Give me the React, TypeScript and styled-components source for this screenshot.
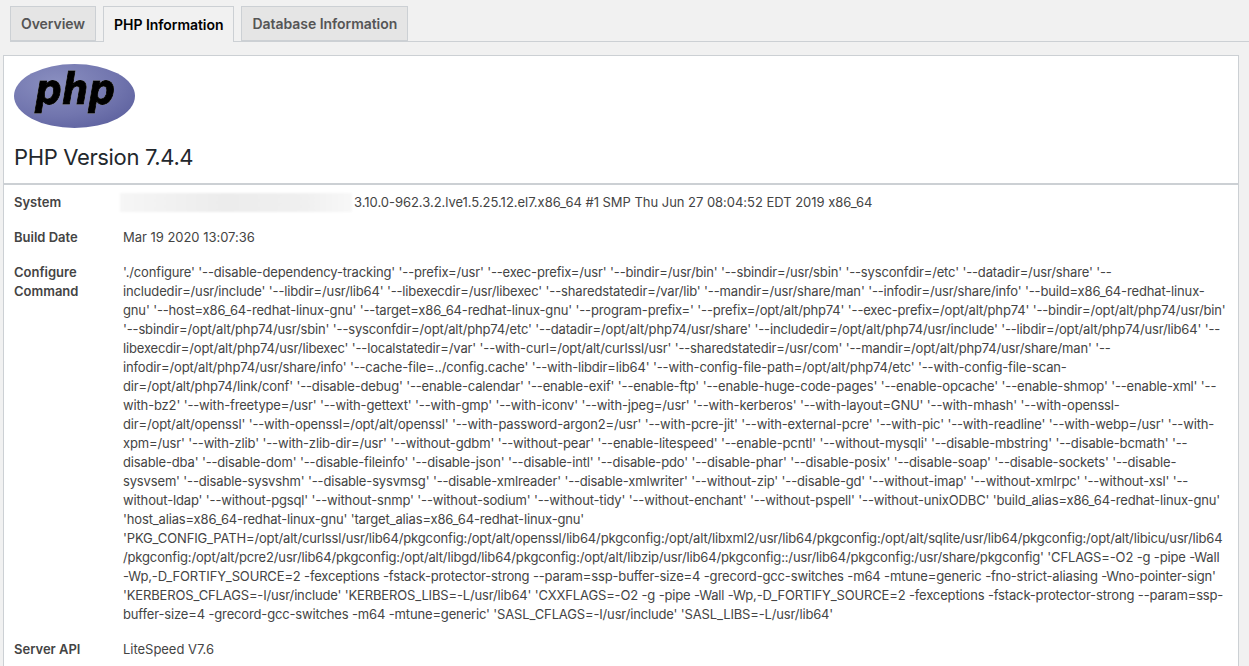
import styled, { createGlobalStyle } from "styled-components";

const GlobalStyle = createGlobalStyle`
  html, body {
    margin: 0;
    padding: 0;
    background: #f1f1f1;
    overflow: hidden;
  }
  body {
    font-family: Inter, "Liberation Sans", sans-serif;
    font-feature-settings: "calt" 0;
    color: #444;
    font-size: 13px;
  }
`;

const Page = styled.div`
  height: 666px;
  padding: 6px 10px 0 3px;
  box-sizing: border-box;
  overflow: hidden;
`;

const TabBar = styled.div`
  display: flex;
  gap: 7px;
  height: 36px;
  margin-left: 7px;
  margin-right: -10px;
  border-bottom: 1px solid #ccd0d4;
  box-sizing: border-box;
`;

const Tab = styled.div<{ $active?: boolean }>`
  height: ${(p) => (p.$active ? "36px" : "35px")};
  padding: ${(p) => (p.$active ? "0 10px 1px" : "0 10px")};
  display: flex;
  align-items: center;
  box-sizing: border-box;
  border: 1px solid #ccd0d4;
  border-bottom: ${(p) => (p.$active ? "none" : "1px solid #ccd0d4")};
  background: ${(p) => (p.$active ? "#f1f1f1" : "#e5e5e5")};
  color: ${(p) => (p.$active ? "#000" : "#555")};
  font-size: 14px;
  font-weight: 600;
  letter-spacing: -0.05px;
  white-space: nowrap;
`;

const Card = styled.div`
  margin-top: 13px;
  background: #fff;
  border: 1px solid #ccd0d4;
  border-bottom: none;
  height: 620px;
  overflow: hidden;
`;

const Head = styled.div`
  height: 129px;
  padding: 8px 10px 0;
  box-sizing: border-box;
  border-bottom: 2px solid #ccd0d4;
`;

const Logo = styled.svg`
  display: block;
  width: 122px;
  height: 65px;
`;

const LogoText = styled.text`
  font-family: "DejaVu Sans", sans-serif;
  font-size: 42px;
  font-weight: 700;
  font-style: italic;
  fill: #000;
  stroke: #000;
  stroke-width: 1px;
  filter: drop-shadow(0.6px 0.6px 0 #fff);
`;

const Title = styled.h1`
  margin: 13px 0 0;
  font-size: 22px;
  line-height: 30px;
  font-weight: 400;
  letter-spacing: -0.35px;
  color: #23282d;
`;

const Row = styled.div`
  display: flex;
  padding: 8px 10px;
  line-height: 19px;
`;

const Label = styled.div`
  flex: 0 0 109px;
  font-weight: 600;
  color: #444;
`;

const Value = styled.div`
  flex: 1;
  color: #444;
  letter-spacing: -0.03px;
  white-space: nowrap;
`;

const Line = styled.div`
  letter-spacing: -0.15px;
`;

const Blur = styled.span`
  display: inline-block;
  width: 232px;
  height: 19px;
  margin-left: -3px;
  margin-right: 2px;
  vertical-align: top;
  background: linear-gradient(90deg, #f6f6f6, #ececec 45%, #f0f0f0 80%, #f8f8f8);
  filter: blur(1px);
`;

const configureLines = [
  "'./configure' '--disable-dependency-tracking' '--prefix=/usr' '--exec-prefix=/usr' '--bindir=/usr/bin' '--sbindir=/usr/sbin' '--sysconfdir=/etc' '--datadir=/usr/share' '--",
  "includedir=/usr/include' '--libdir=/usr/lib64' '--libexecdir=/usr/libexec' '--sharedstatedir=/var/lib' '--mandir=/usr/share/man' '--infodir=/usr/share/info' '--build=x86_64-redhat-linux-",
  "gnu' '--host=x86_64-redhat-linux-gnu' '--target=x86_64-redhat-linux-gnu' '--program-prefix=' '--prefix=/opt/alt/php74' '--exec-prefix=/opt/alt/php74' '--bindir=/opt/alt/php74/usr/bin'",
  "'--sbindir=/opt/alt/php74/usr/sbin' '--sysconfdir=/opt/alt/php74/etc' '--datadir=/opt/alt/php74/usr/share' '--includedir=/opt/alt/php74/usr/include' '--libdir=/opt/alt/php74/usr/lib64' '--",
  "libexecdir=/opt/alt/php74/usr/libexec' '--localstatedir=/var' '--with-curl=/opt/alt/curlssl/usr' '--sharedstatedir=/usr/com' '--mandir=/opt/alt/php74/usr/share/man' '--",
  "infodir=/opt/alt/php74/usr/share/info' '--cache-file=../config.cache' '--with-libdir=lib64' '--with-config-file-path=/opt/alt/php74/etc' '--with-config-file-scan-",
  "dir=/opt/alt/php74/link/conf' '--disable-debug' '--enable-calendar' '--enable-exif' '--enable-ftp' '--enable-huge-code-pages' '--enable-opcache' '--enable-shmop' '--enable-xml' '--",
  "with-bz2' '--with-freetype=/usr' '--with-gettext' '--with-gmp' '--with-iconv' '--with-jpeg=/usr' '--with-kerberos' '--with-layout=GNU' '--with-mhash' '--with-openssl-",
  "dir=/opt/alt/openssl' '--with-openssl=/opt/alt/openssl' '--with-password-argon2=/usr' '--with-pcre-jit' '--with-external-pcre' '--with-pic' '--with-readline' '--with-webp=/usr' '--with-",
  "xpm=/usr' '--with-zlib' '--with-zlib-dir=/usr' '--without-gdbm' '--without-pear' '--enable-litespeed' '--enable-pcntl' '--without-mysqli' '--disable-mbstring' '--disable-bcmath' '--",
  "disable-dba' '--disable-dom' '--disable-fileinfo' '--disable-json' '--disable-intl' '--disable-pdo' '--disable-phar' '--disable-posix' '--disable-soap' '--disable-sockets' '--disable-",
  "sysvsem' '--disable-sysvshm' '--disable-sysvmsg' '--disable-xmlreader' '--disable-xmlwriter' '--without-zip' '--disable-gd' '--without-imap' '--without-xmlrpc' '--without-xsl' '--",
  "without-ldap' '--without-pgsql' '--without-snmp' '--without-sodium' '--without-tidy' '--without-enchant' '--without-pspell' '--without-unixODBC' 'build_alias=x86_64-redhat-linux-gnu'",
  "'host_alias=x86_64-redhat-linux-gnu' 'target_alias=x86_64-redhat-linux-gnu'",
  "'PKG_CONFIG_PATH=/opt/alt/curlssl/usr/lib64/pkgconfig:/opt/alt/openssl/lib64/pkgconfig:/opt/alt/libxml2/usr/lib64/pkgconfig:/opt/alt/sqlite/usr/lib64/pkgconfig:/opt/alt/libicu/usr/lib64",
  "/pkgconfig:/opt/alt/pcre2/usr/lib64/pkgconfig:/opt/alt/libgd/lib64/pkgconfig:/opt/alt/libzip/usr/lib64/pkgconfig::/usr/lib64/pkgconfig:/usr/share/pkgconfig' 'CFLAGS=-O2 -g -pipe -Wall",
  "-Wp,-D_FORTIFY_SOURCE=2 -fexceptions -fstack-protector-strong --param=ssp-buffer-size=4 -grecord-gcc-switches -m64 -mtune=generic -fno-strict-aliasing -Wno-pointer-sign'",
  "'KERBEROS_CFLAGS=-I/usr/include' 'KERBEROS_LIBS=-L/usr/lib64' 'CXXFLAGS=-O2 -g -pipe -Wall -Wp,-D_FORTIFY_SOURCE=2 -fexceptions -fstack-protector-strong --param=ssp-",
  "buffer-size=4 -grecord-gcc-switches -m64 -mtune=generic' 'SASL_CFLAGS=-I/usr/include' 'SASL_LIBS=-L/usr/lib64'",
];

function PhpLogo() {
  return (
    <Logo viewBox="0 0 122 65">
      <defs>
        <radialGradient id="phpOval" cx="0.35" cy="0.3" r="0.85">
          <stop offset="0" stopColor="#8a8fc0" />
          <stop offset="0.6" stopColor="#7175ae" />
          <stop offset="1" stopColor="#5a5e9c" />
        </radialGradient>
      </defs>
      <ellipse cx="60.5" cy="32" rx="60.5" ry="32" fill="url(#phpOval)" />
      <LogoText x="21" y="40" textLength="80" lengthAdjust="spacingAndGlyphs">
        php
      </LogoText>
    </Logo>
  );
}

export default function App() {
  return (
    <Page>
      <GlobalStyle />
      <TabBar>
        <Tab>Overview</Tab>
        <Tab $active>PHP Information</Tab>
        <Tab>Database Information</Tab>
      </TabBar>
      <Card>
        <Head>
          <PhpLogo />
          <Title>PHP Version 7.4.4</Title>
        </Head>
        <Row>
          <Label>System</Label>
          <Value>
            <Blur />
            3.10.0-962.3.2.lve1.5.25.12.el7.x86_64 #1 SMP Thu Jun 27 08:04:52 EDT 2019 x86_64
          </Value>
        </Row>
        <Row>
          <Label>Build Date</Label>
          <Value>Mar 19 2020 13:07:36</Value>
        </Row>
        <Row>
          <Label>
            Configure
            <br />
            Command
          </Label>
          <Value>
            {configureLines.map((line, idx) => (
              <Line key={idx}>{line}</Line>
            ))}
          </Value>
        </Row>
        <Row>
          <Label>Server API</Label>
          <Value>LiteSpeed V7.6</Value>
        </Row>
      </Card>
    </Page>
  );
}
